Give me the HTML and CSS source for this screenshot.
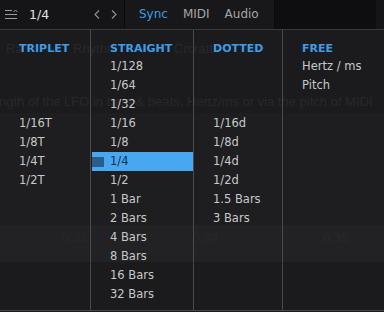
FILE: index.html
```html
<!DOCTYPE html>
<html lang="en">
<head>
    <meta charset="UTF-8">
    <title>LFO Rate</title>
    <link rel="stylesheet" href="styles.css">
</head>
<body>
<div class="topbar">
    <div class="preset">
        <svg class="menu-icon" width="13" height="11" viewBox="0 0 13 11">
            <path d="M0 1.5H7M0 5.5H12M0 9.5H12" stroke="#9c9c9c" stroke-width="1"/>
            <path d="M8.5 3L10.5 1L12.5 3" stroke="#9c9c9c" stroke-width="1" fill="none"/>
        </svg>
        <span class="value">1/4</span>
        <span class="arrows">
            <svg width="6" height="9" viewBox="0 0 6 9"><path d="M5 0.5L1 4.5L5 8.5" stroke="#8e8e8e" stroke-width="1.2" fill="none"/></svg>
            <svg width="6" height="9" viewBox="0 0 6 9"><path d="M1 0.5L5 4.5L1 8.5" stroke="#8e8e8e" stroke-width="1.2" fill="none"/></svg>
        </span>
    </div>
    <div class="tabs">
        <span class="tab tab-active">Sync</span>
        <span class="tab">MIDI</span>
        <span class="tab">Audio</span>
    </div>
    <div class="blank"></div>
    <div class="edge"></div>
</div>

<div class="menu">
    <!-- the plugin window behind the popup -->
    <div class="ghost">
        <div class="band band-1"></div>
        <div class="band band-2"></div>
        <span class="ghost-text g-ra">Ra</span>
        <span class="ghost-text g-rhythm">Rhythm</span>
        <span class="ghost-text g-cro">Cro</span>
        <span class="ghost-text g-ratt">ratt</span>
        <span class="ghost-text g-desc">ngth of the LFO in bars &amp; beats, Hertz/ms or via the pitch of MIDI</span>
        <span class="ghost-text g-t1">0:33</span>
        <span class="ghost-text g-t2">0:34</span>
        <span class="ghost-text g-t3">0:35</span>
    </div>

    <div class="col">
        <div class="head">TRIPLET</div>
        <div class="list skip-3">
            <div class="item">1/16T</div>
            <div class="item">1/8T</div>
            <div class="item">1/4T</div>
            <div class="item">1/2T</div>
        </div>
    </div>
    <div class="col">
        <div class="head">STRAIGHT</div>
        <div class="list">
            <div class="item">1/128</div>
            <div class="item">1/64</div>
            <div class="item">1/32</div>
            <div class="item">1/16</div>
            <div class="item">1/8</div>
            <div class="item item-selected"><span class="mark"></span>1/4</div>
            <div class="item">1/2</div>
            <div class="item">1 Bar</div>
            <div class="item">2 Bars</div>
            <div class="item">4 Bars</div>
            <div class="item">8 Bars</div>
            <div class="item">16 Bars</div>
            <div class="item">32 Bars</div>
        </div>
    </div>
    <div class="col">
        <div class="head">DOTTED</div>
        <div class="list skip-3">
            <div class="item">1/16d</div>
            <div class="item">1/8d</div>
            <div class="item">1/4d</div>
            <div class="item">1/2d</div>
            <div class="item">1.5 Bars</div>
            <div class="item">3 Bars</div>
        </div>
    </div>
    <div class="col">
        <div class="head">FREE</div>
        <div class="list">
            <div class="item">Hertz / ms</div>
            <div class="item">Pitch</div>
        </div>
    </div>
</div>
</body>
</html>
```

FILE: styles.css
```css
* {
    margin: 0;
    padding: 0;
    box-sizing: border-box;
}

body {
    width: 384px;
    height: 312px;
    overflow: hidden;
    background-color: #1b1b1d;
    font-family: "DejaVu Sans", sans-serif;
}

/* top bar */
.topbar {
    display: flex;
    height: 30px;
    border-bottom: 1px solid #3a3a3c;
}

.preset {
    width: 125px;
    display: flex;
    align-items: center;
    background-color: #151517;
    border-right: 1px solid #0a0a0b;
    padding-left: 5px;
    padding-bottom: 1px;
}

.value {
    margin-left: 11px;
    font-size: 12.5px;
    color: #e2e2e2;
}

.arrows {
    display: flex;
    gap: 11px;
    margin-left: 45px;
}

.tabs {
    width: 150px;
    display: flex;
    align-items: center;
    gap: 15px;
    padding-left: 14px;
    padding-bottom: 2px;
    background-color: #18181a;
    border-right: 1px solid #0a0a0b;
}

.tab {
    font-size: 12px;
    color: #a6a6a6;
}

.tab-active {
    color: #3c9ce6;
}

.blank {
    width: 101px;
    background-color: #0e0e10;
}

.edge {
    flex: 1;
    background-color: #151517;
}

/* popup menu */
.menu {
    position: relative;
    display: grid;
    grid-template-columns: 91px 103px 89px 1fr;
    height: 281px;
    border-bottom: 1px solid #464648;
}

.col {
    position: relative;
    z-index: 1;
    padding-top: 10px;
    border-right: 1px solid #4a4a4c;
}

.col:last-child {
    border-right: none;
}

.head {
    height: 17px;
    line-height: 17px;
    padding-left: 19px;
    font-size: 11px;
    font-weight: bold;
    color: #3d9de8;
}

.skip-3 {
    padding-top: 57px;
}

.item {
    height: 19px;
    line-height: 19px;
    padding-left: 19px;
    font-size: 11.5px;
    color: #c6c8ca;
    white-space: nowrap;
}

.item-selected {
    display: flex;
    align-items: center;
    margin-left: 1px;
    padding-left: 0;
    background-color: #48a7f1;
    color: #17304a;
}

.mark {
    width: 12px;
    height: 10px;
    margin-right: 6px;
    background-color: #2a5d8c;
}

/* background app seen through the popup */
.ghost {
    position: absolute;
    inset: 0;
    z-index: 0;
    overflow: hidden;
}

.band {
    position: absolute;
    left: 0;
    right: 0;
}

.band-1 {
    top: 83px;
    height: 112px;
    background-color: #1e1e20;
}

.band-2 {
    top: 195px;
    height: 37px;
    background-color: #222224;
}

.ghost-text {
    position: absolute;
    font-family: "Liberation Sans", sans-serif;
    font-size: 13px;
    color: #28282b;
    white-space: nowrap;
}

.g-ra { left: 6px; top: 11px; }
.g-rhythm { left: 73px; top: 11px; }
.g-cro { left: 174px; top: 11px; }
.g-ratt { left: 194px; top: 11px; }
.g-desc { left: -1px; top: 64px; font-size: 13px; }
.g-t1 { left: 62px; top: 200px; }
.g-t2 { left: 193px; top: 200px; }
.g-t3 { left: 323px; top: 200px; }
```
